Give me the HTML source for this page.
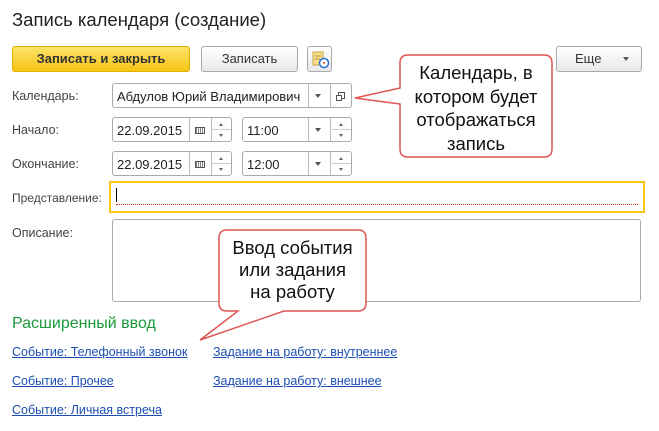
<!DOCTYPE html>
<html><head><meta charset="utf-8"><style>
*{box-sizing:border-box;margin:0;padding:0}
body{width:659px;height:431px;background:#fff;font-family:"Liberation Sans",Arial,sans-serif;color:#333;position:relative;overflow:hidden;font-size:12px}
.a{position:absolute}
.btn{position:absolute;border:1px solid #aaa;border-radius:3px;background:linear-gradient(#fff,#e8e8e8);text-align:center;font-size:13px;color:#333;line-height:23px}
.fld{position:absolute;border:1px solid #aaa;border-radius:3px;background:#fff;height:25px}
.div{position:absolute;top:0;bottom:0;border-left:1px solid #bbb}
.lbl{position:absolute;left:12px;font-size:12.5px;color:#444}
.txt{position:absolute;left:4px;top:5px;font-size:13px;color:#222}
.tri{position:absolute;width:0;height:0;border-left:3.5px solid transparent;border-right:3.5px solid transparent;border-top:4px solid #555}
.up{position:absolute;width:0;height:0;border-left:2px solid transparent;border-right:2px solid transparent;border-bottom:3px solid #666}
.dn{position:absolute;width:0;height:0;border-left:2px solid transparent;border-right:2px solid transparent;border-top:3px solid #666}
.lnk{position:absolute;color:#1d4fb3;text-decoration:underline;font-size:12.5px}
.call{position:absolute;text-align:center;font-size:18.5px;color:#111}
</style></head><body>
<div class="a" style="left:12px;top:9px;font-size:18.5px;color:#222">Запись календаря (создание)</div>

<div class="btn" style="left:12px;top:46px;width:178px;height:26px;background:linear-gradient(#fde36a,#f6c412);border-color:#e0b000;font-weight:bold;color:#333">Записать и закрыть</div>
<div class="btn" style="left:201px;top:46px;width:97px;height:26px">Записать</div>
<div class="btn" style="left:307px;top:46px;width:25px;height:26px">
<svg width="23" height="24" style="position:absolute;left:0;top:0"><rect x="5" y="5" width="10" height="13" fill="#f4dc8a" stroke="#c9a84a"/><line x1="7" y1="9" x2="13" y2="9" stroke="#b89640"/><line x1="7" y1="12" x2="12" y2="12" stroke="#b89640"/><circle cx="16" cy="16" r="4.5" fill="#fff" stroke="#2a6fd0" stroke-width="1.5"/><circle cx="16" cy="16" r="1" fill="#d33"/></svg></div>
<div class="btn" style="left:556px;top:46px;width:86px;height:26px;text-align:left;padding-left:18px">Еще<div class="tri" style="left:66px;top:10px"></div></div>

<div class="lbl" style="top:89px">Календарь:</div>
<div class="fld" style="left:112px;top:83px;width:240px"><div class="txt">Абдулов Юрий Владимирович</div>
<div class="div" style="left:195px"></div><div class="tri" style="left:202px;top:10px"></div>
<div class="div" style="left:217px"></div>
<div class="a" style="left:225px;top:8px;width:7px;height:7px;border:1px solid #555"></div><div class="a" style="left:223px;top:11px;width:6px;height:6px;border:1px solid #555;background:#fff"></div></div>

<div class="lbl" style="top:123px">Начало:</div>
<div class="lbl" style="top:157px">Окончание:</div>
<div class="fld" style="left:112px;top:117px;width:120px"><div class="txt">22.09.2015</div><div class="div" style="left:76px"></div><div class="a" style="left:82px;top:9px;width:10px;height:7px;border:1px solid #555;background:repeating-linear-gradient(90deg,#888 0 1px,#fff 1px 2px)"></div><div class="div" style="left:98px"></div><div class="a" style="left:98px;right:0;top:11px;border-top:1px solid #ccc"></div><div class="up" style="left:106px;top:5px"></div><div class="dn" style="left:106px;top:16px"></div></div>
<div class="fld" style="left:242px;top:117px;width:110px"><div class="txt">11:00</div><div class="div" style="left:65px"></div><div class="tri" style="left:72px;top:10px"></div><div class="div" style="left:87px"></div><div class="a" style="left:87px;right:0;top:11px;border-top:1px solid #ccc"></div><div class="up" style="left:96px;top:5px"></div><div class="dn" style="left:96px;top:16px"></div></div>
<div class="fld" style="left:112px;top:151px;width:120px"><div class="txt">22.09.2015</div><div class="div" style="left:76px"></div><div class="a" style="left:82px;top:9px;width:10px;height:7px;border:1px solid #555;background:repeating-linear-gradient(90deg,#888 0 1px,#fff 1px 2px)"></div><div class="div" style="left:98px"></div><div class="a" style="left:98px;right:0;top:11px;border-top:1px solid #ccc"></div><div class="up" style="left:106px;top:5px"></div><div class="dn" style="left:106px;top:16px"></div></div>
<div class="fld" style="left:242px;top:151px;width:110px"><div class="txt">12:00</div><div class="div" style="left:65px"></div><div class="tri" style="left:72px;top:10px"></div><div class="div" style="left:87px"></div><div class="a" style="left:87px;right:0;top:11px;border-top:1px solid #ccc"></div><div class="up" style="left:96px;top:5px"></div><div class="dn" style="left:96px;top:16px"></div></div>

<div class="lbl" style="top:191px;font-size:12px">Представление:</div>
<div class="a" style="left:109px;top:181px;width:536px;height:32px;border:2px solid #f5c518"></div>
<div class="a" style="left:116px;top:188px;width:1px;height:14px;background:#000"></div>
<div class="a" style="left:116px;top:204px;width:522px;border-top:1px dotted #d22"></div>

<div class="lbl" style="top:226px">Описание:</div>
<div class="a" style="left:112px;top:219px;width:529px;height:83px;border:1px solid #aaa;border-radius:3px"></div>

<svg class="a" style="left:0;top:0" width="659" height="431">
<path d="M408,55 H544 Q552,55 552,63 V149 Q552,157 544,157 H408 Q400,157 400,149 V104 L355,98 L400,88 V63 Q400,55 408,55 Z" fill="#fff" stroke="#e05555" stroke-width="1.5"/>
<path d="M227,230 H358 Q366,230 366,238 V303 Q366,311 358,311 H284 L200,340 L238,311 H227 Q219,311 219,303 V238 Q219,230 227,230 Z" fill="#fff" stroke="#e05555" stroke-width="1.5"/>
</svg>
<div class="call" style="left:400px;top:61px;width:152px;line-height:23.5px">Календарь, в<br>котором будет<br>отображаться<br>запись</div>
<div class="call" style="left:219px;top:237px;width:147px;line-height:22px">Ввод события<br>или задания<br>на работу</div>

<div class="a" style="left:12px;top:315px;font-size:16px;color:#1a9a3a">Расширенный ввод</div>
<div class="lnk" style="left:12px;top:345px">Событие: Телефонный звонок</div>
<div class="lnk" style="left:213px;top:345px">Задание на работу: внутреннее</div>
<div class="lnk" style="left:12px;top:374px">Событие: Прочее</div>
<div class="lnk" style="left:213px;top:374px">Задание на работу: внешнее</div>
<div class="lnk" style="left:12px;top:403px">Событие: Личная встреча</div>
</body></html>
